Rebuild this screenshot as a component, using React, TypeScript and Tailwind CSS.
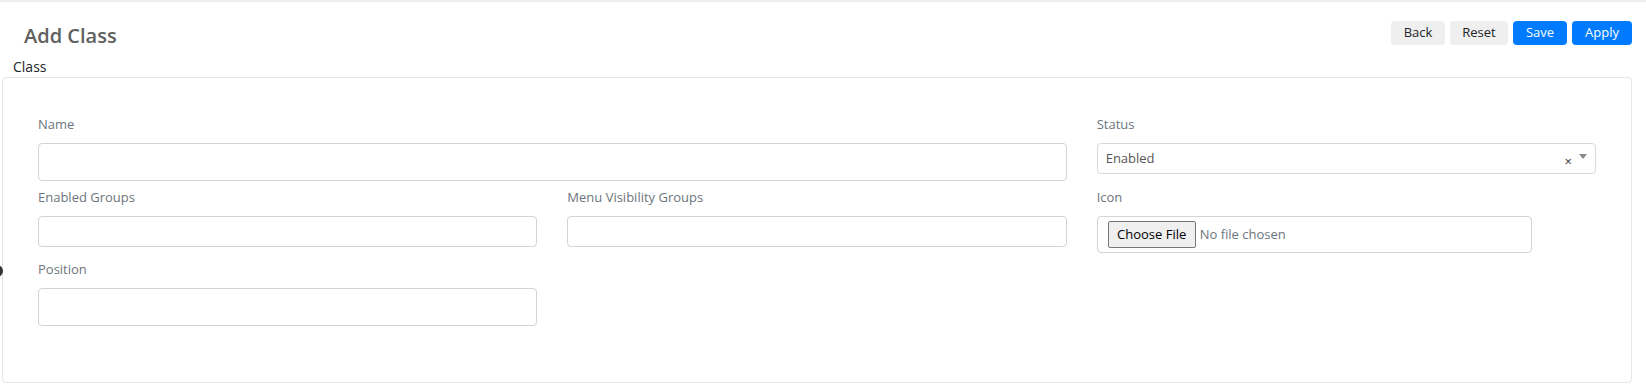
import React from "react";

const font = "font-['Open_Sans','Noto_Sans',sans-serif]";

const Label = ({ children }: { children: React.ReactNode }) => (
  <label className="mb-[8px] block pt-[1px] text-[13px] leading-[21px] text-[#6c757d]">
    {children}
  </label>
);

const TextInput = ({ h }: { h: string }) => (
  <input
    type="text"
    className={`block w-full rounded-[4px] border border-[#ced4da] bg-white px-3 outline-none ${h}`}
  />
);

export default function App() {
  return (
    <div className={`relative min-h-[386px] w-full border-t-2 border-[#efefef] bg-white ${font}`}>
      {/* header */}
      <div className="flex items-start justify-between pl-[24px] pr-[14px] pt-[19px]">
        <h1 className="mt-[3px] text-[20px] leading-[24px] font-semibold text-[#606060]">
          Add Class
        </h1>
        <div className="flex gap-[5px]">
          <button className="h-[24px] w-[54px] rounded-[4px] bg-[#efefef] text-[13px] text-[#212529]">
            Back
          </button>
          <button className="h-[24px] w-[58px] rounded-[4px] bg-[#efefef] text-[13px] text-[#212529]">
            Reset
          </button>
          <button className="h-[24px] w-[54px] rounded-[4px] bg-[#007bff] text-[13px] text-white">
            Save
          </button>
          <button className="h-[24px] w-[60px] rounded-[4px] bg-[#007bff] text-[13px] text-white">
            Apply
          </button>
        </div>
      </div>

      <div className="ml-[13px] mt-[8px] text-[14px] leading-[21px] text-[#212529]">Class</div>

      {/* card */}
      <div className="mb-[3px] ml-[2px] mr-[14px] rounded-[4px] border border-[#e6e6e6] px-[35px] pb-[56px] pt-[35px]">
        <div className="grid grid-cols-3 gap-x-[30px] gap-y-[5px]">
          <div className="col-span-2">
            <Label>Name</Label>
            <TextInput h="h-[38px]" />
          </div>
          <div>
            <Label>Status</Label>
            <div className="flex h-[31px] items-center rounded-[4px] border border-[#d9d9d9] pl-[8px] pr-[8px]">
              <span className="flex-1 text-[13px] text-[#555]">Enabled</span>
              <span className="mr-[7px] mt-[5px] text-[13px] leading-none text-[#333]">×</span>
              <span className="mb-[4px] h-0 w-0 border-x-[4px] border-t-[5px] border-x-transparent border-t-[#888]" />
            </div>
          </div>

          <div>
            <Label>Enabled Groups</Label>
            <TextInput h="h-[31px]" />
          </div>
          <div>
            <Label>Menu Visibility Groups</Label>
            <TextInput h="h-[31px]" />
          </div>
          <div>
            <Label>Icon</Label>
            <div className="flex h-[37px] w-[435px] items-center rounded-[4px] border border-[#ced4da] pl-[10px]">
              <span className="flex h-[27px] w-[88px] items-center justify-center rounded-[2px] border border-[#767676] bg-[#efefef] text-[13px] text-black">
                Choose File
              </span>
              <span className="ml-[4px] text-[13px] text-[#6c757d]">No file chosen</span>
            </div>
          </div>

          <div>
            <Label>Position</Label>
            <TextInput h="h-[38px]" />
          </div>
        </div>
      </div>

      {/* side handle */}
      <div className="absolute left-[-9px] top-[263px] h-[12px] w-[12px] rounded-full bg-[#333]" />
    </div>
  );
}
